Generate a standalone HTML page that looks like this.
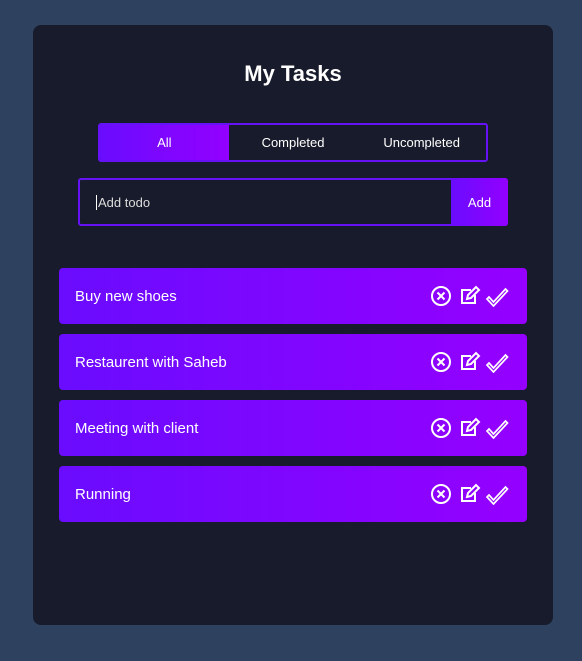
<!DOCTYPE html>
<html><head><meta charset="utf-8"><style>
*{box-sizing:border-box;margin:0;padding:0}
body{width:582px;height:661px;background:#2e4260;font-family:"Liberation Sans",sans-serif;position:relative;overflow:hidden}
.card{position:absolute;left:33px;top:25px;width:520px;height:600px;background:#181b2b;border-radius:8px}
h1{position:absolute;left:0;right:0;top:36px;text-align:center;color:#fff;font-size:22px;font-weight:bold}
.tabs{position:absolute;left:65px;top:98px;width:390px;height:39px;border:2px solid #6513f5;border-radius:3px;display:flex;overflow:hidden}
.tabs div{flex:1;display:flex;align-items:center;justify-content:center;color:#fff;font-size:13px}
.tabs .on{background:linear-gradient(90deg,#6a0cff,#9300ff)}
.inp{position:absolute;left:45px;top:153px;width:430px;height:48px;border:2px solid #6513f5;border-radius:3px;display:flex}
.inp .t{flex:1;color:#ddd;font-size:13px;display:flex;align-items:center;padding-left:16px}
.inp .t span{border-left:1px solid #fff;padding-left:1px}
.inp .b{width:57px;margin:-2px -2px -2px 0;border-radius:0 3px 3px 0;background:linear-gradient(90deg,#6a0cff,#9300ff);color:#fff;font-size:13px;display:flex;align-items:center;justify-content:center}
.item{position:absolute;left:26px;width:468px;height:56px;border-radius:4px;background:linear-gradient(90deg,#6a0cff,#9500ff);color:#fff;font-size:15px;display:flex;align-items:center;padding-left:16px}
.ic{position:absolute;right:12px;top:17px;width:84px;height:22px}
</style></head><body>
<div class="card">
<h1>My Tasks</h1>
<div class="tabs"><div class="on">All</div><div>Completed</div><div>Uncompleted</div></div>
<div class="inp"><div class="t"><span>Add todo</span></div><div class="b">Add</div></div>
<div class="item" style="top:243px">Buy new shoes<svg class="ic" viewBox="0 0 84 22" fill="none" stroke="#fff" stroke-width="2"><circle cx="10" cy="11" r="9"/><path d="M6.5 7.5l7 7M13.5 7.5l-7 7"/><path d="M40 5h-9v13h13v-8"/><path d="M36 14l1-4 8-8 3 3-8 8z"/><path d="M58 12l4.5 5 12-13 2 2-14 15-6.5-7z" stroke-width="1.7"/></svg></div>
<div class="item" style="top:309px">Restaurent with Saheb<svg class="ic" viewBox="0 0 84 22" fill="none" stroke="#fff" stroke-width="2"><circle cx="10" cy="11" r="9"/><path d="M6.5 7.5l7 7M13.5 7.5l-7 7"/><path d="M40 5h-9v13h13v-8"/><path d="M36 14l1-4 8-8 3 3-8 8z"/><path d="M58 12l4.5 5 12-13 2 2-14 15-6.5-7z" stroke-width="1.7"/></svg></div>
<div class="item" style="top:375px">Meeting with client<svg class="ic" viewBox="0 0 84 22" fill="none" stroke="#fff" stroke-width="2"><circle cx="10" cy="11" r="9"/><path d="M6.5 7.5l7 7M13.5 7.5l-7 7"/><path d="M40 5h-9v13h13v-8"/><path d="M36 14l1-4 8-8 3 3-8 8z"/><path d="M58 12l4.5 5 12-13 2 2-14 15-6.5-7z" stroke-width="1.7"/></svg></div>
<div class="item" style="top:441px">Running<svg class="ic" viewBox="0 0 84 22" fill="none" stroke="#fff" stroke-width="2"><circle cx="10" cy="11" r="9"/><path d="M6.5 7.5l7 7M13.5 7.5l-7 7"/><path d="M40 5h-9v13h13v-8"/><path d="M36 14l1-4 8-8 3 3-8 8z"/><path d="M58 12l4.5 5 12-13 2 2-14 15-6.5-7z" stroke-width="1.7"/></svg></div>
</div>
</body></html>
